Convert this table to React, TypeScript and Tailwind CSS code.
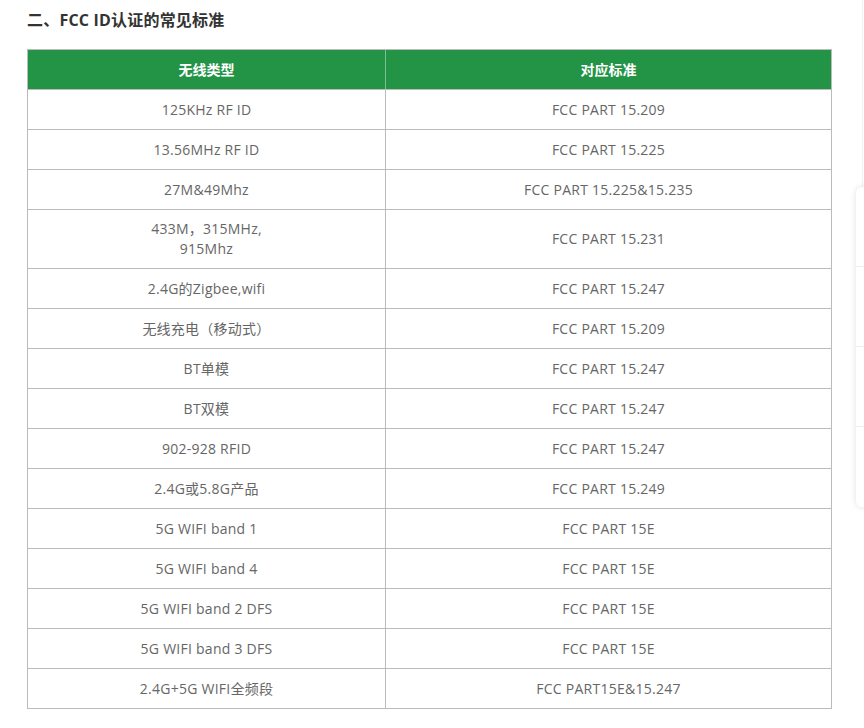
import React from "react";

const rows: { a: React.ReactNode; b: string; h?: string }[] = [
  { a: "125KHz RF ID", b: "FCC PART 15.209" },
  { a: "13.56MHz RF ID", b: "FCC PART 15.225" },
  { a: "27M&49Mhz", b: "FCC PART 15.225&15.235" },
  {
    a: (
      <>
        433M，315MHz,
        <br />
        915Mhz
      </>
    ),
    b: "FCC PART 15.231",
    h: "tall",
  },
  { a: "2.4G的Zigbee,wifi", b: "FCC PART 15.247" },
  { a: "无线充电（移动式）", b: "FCC PART 15.209" },
  { a: "BT单模", b: "FCC PART 15.247" },
  { a: "BT双模", b: "FCC PART 15.247" },
  { a: "902-928 RFID", b: "FCC PART 15.247" },
  { a: "2.4G或5.8G产品", b: "FCC PART 15.249" },
  { a: "5G WIFI band 1", b: "FCC PART 15E" },
  { a: "5G WIFI band 4", b: "FCC PART 15E" },
  { a: "5G WIFI band 2 DFS", b: "FCC PART 15E" },
  { a: "5G WIFI band 3 DFS", b: "FCC PART 15E" },
  { a: "2.4G+5G WIFI全频段", b: "FCC PART15E&15.247" },
];

export default function App() {
  return (
    <div
      className="relative w-[864px] h-[728px] bg-white overflow-hidden"
      style={{ fontFamily: '"Open Sans","Noto Sans CJK SC",sans-serif' }}
    >
      <div className="pl-[27px] pt-[8px]">
        <h2 className="text-[16px] leading-[24px] font-bold text-[#333] tracking-[0.2px]">
          二、FCC ID认证的常见标准
        </h2>
        <div className="mt-[17px] w-[805px] border-l border-r border-t border-[#bbb]">
          <div className="grid grid-cols-[357px_1px_445px] h-[40px] bg-[#239346] border-b border-[#bbb]">
            <div className="flex items-center justify-center text-white font-bold text-[14px]">
              无线类型
            </div>
            <div className="bg-[#7cc092]" />
            <div className="flex items-center justify-center text-white font-bold text-[14px]">
              对应标准
            </div>
          </div>
          {rows.map((r, i) => (
            <div
              key={i}
              className={
                "grid grid-cols-[357px_1px_445px] border-b border-[#bbb] text-[14px] text-[#666] tracking-[0.25px] " +
                (r.h ? "h-[59px]" : "h-[40px]")
              }
            >
              <div className="flex items-center justify-center text-center leading-[20px]">
                <span>{r.a}</span>
              </div>
              <div className="bg-[#bbb]" />
              <div className="flex items-center justify-center text-center leading-[20px]">
                {r.b}
              </div>
            </div>
          ))}
        </div>
      </div>

      <div className="absolute left-[862px] top-0 w-px h-[187px] bg-[#f2f2f2]" />
      <div className="absolute left-[856px] top-[187px] w-[30px] h-[320px] bg-white rounded-[6px] shadow-[0_0_6px_rgba(0,0,0,0.12)] flex flex-col">
        <div className="h-[80px] border-b border-[#eee]" />
        <div className="h-[80px] border-b border-[#eee]" />
        <div className="h-[80px] border-b border-[#eee]" />
        <div className="flex-1" />
      </div>
    </div>
  );
}
